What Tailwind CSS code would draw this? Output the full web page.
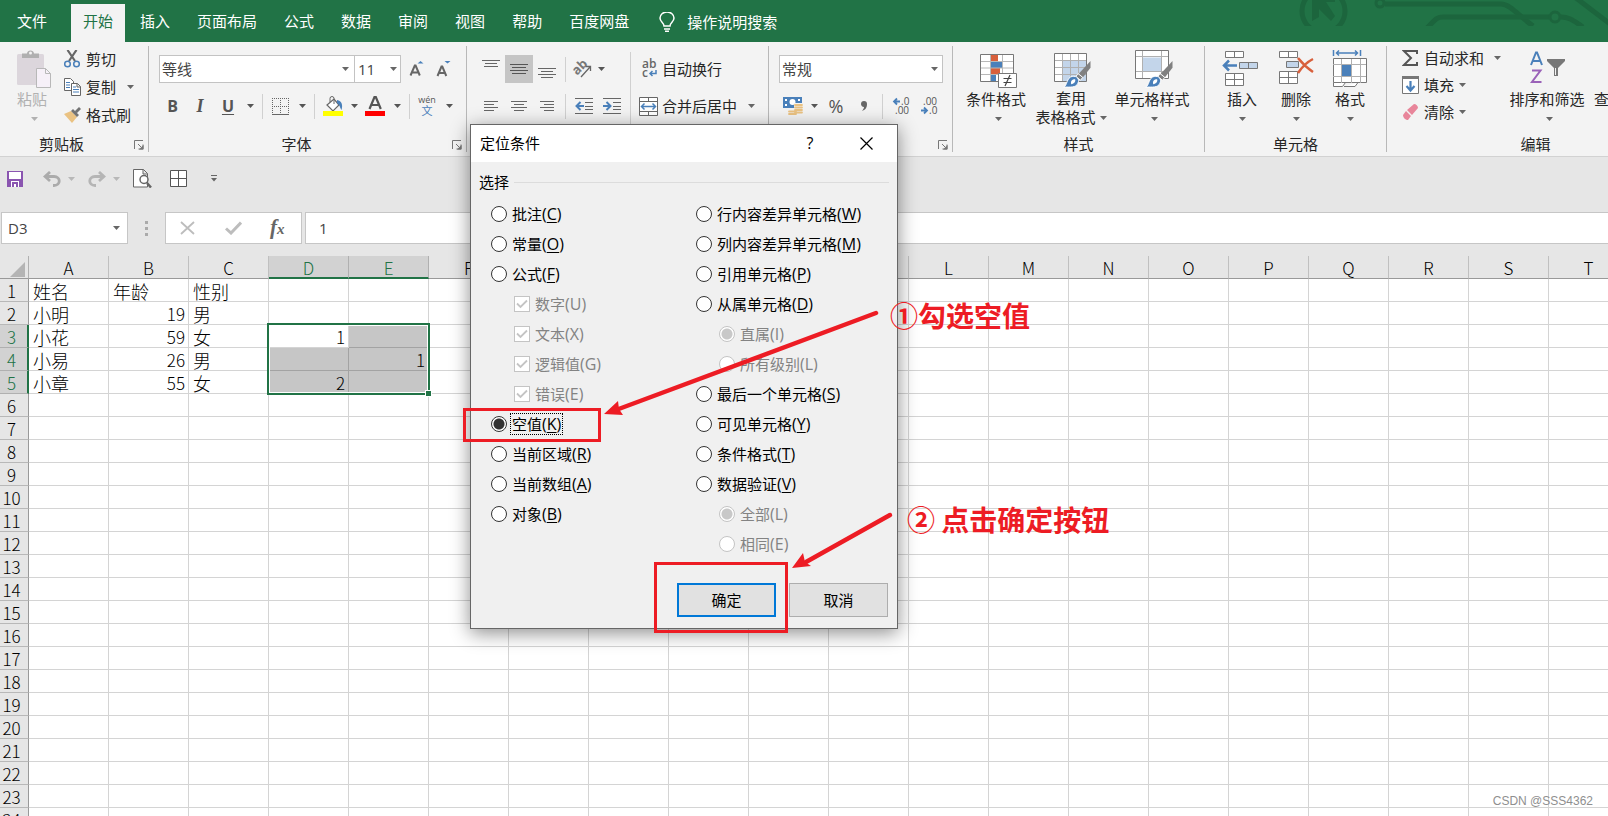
<!DOCTYPE html>
<html lang="zh-CN">
<head>
<meta charset="utf-8">
<title>Excel - 定位条件</title>
<script src="https://cdn.jsdelivr.net/npm/@tailwindcss/browser@4"></script>
</head>
<body class="relative h-screen overflow-hidden bg-[#e6e6e6] font-['Open_Sans','Noto_Sans_CJK_SC',sans-serif] text-[15px] leading-5 text-[#262626]">

<svg class="hidden">
  <symbol id="caret" viewBox="0 0 7 4"><path d="M0 0h7L3.500 4z" fill="currentColor"/></symbol>
  <symbol id="launcher" viewBox="0 0 10 10"><path d="M.5 9V.5H9M4 4l3.500 3.500M9 4.500V9H4.500" fill="none" stroke="#777"/><path d="M9.500 5v4.500H5z" fill="#777"/></symbol>
  <symbol id="brush" viewBox="0 0 28 28"><path d="M28 0v7l-8 10-4-4z" fill="#808080"/><path d="M15 13l5 4-2.500 3-4.500-4z" fill="#808080" stroke="#fff"/><path d="M0 27c4-1 3-10 9-11 5-1 8 3 6 7-2 5-8 4-15 4z" fill="#4a80ba" stroke="#fff"/><path d="M8 24c-1-3 1-5 4-5 1 2-1 5-4 5z" fill="#fff"/></symbol>
</svg>

<div class="flex h-full flex-col">
  <!-- Ribbon tabs -->
  <header class="relative flex h-[42px] shrink-0 items-end overflow-hidden bg-[#217346] text-white">
    <svg class="absolute top-0 right-0 h-[26px] w-[310px]" viewBox="0 0 310 26" fill="none" stroke="#1c653d" stroke-width="5">
      <circle cx="25.500" cy="11" r="21.500"/>
      <path d="M14 0h23v2h-9l9 14-4 5-12-12v8l-7 4z" fill="#1c653d" stroke="none"/>
      <circle cx="82" cy="3" r="4" stroke-width="3"/><path d="M87 4h116c9 0 18 12 32 22"/>
      <path d="M129 28c8-8 9-11 16-11h106"/><circle cx="257" cy="17" r="5" stroke-width="3"/><path d="M263 17c9 0 14 5 22 10M278-2l34 26"/>
    </svg>
    <nav class="flex h-[38px] items-stretch">
      <a href="#" class="flex items-center pr-6 pl-[17px] pb-1">文件</a>
      <div class="flex gap-[3px]">
        <a href="#" class="flex items-center bg-[#f3f3f3] px-3 pb-1 text-[#217346]">开始</a>
        <a href="#" class="flex items-center px-3 pb-1">插入</a>
        <a href="#" class="flex items-center px-3 pb-1">页面布局</a>
        <a href="#" class="flex items-center px-3 pb-1">公式</a>
        <a href="#" class="flex items-center px-3 pb-1">数据</a>
        <a href="#" class="flex items-center px-3 pb-1">审阅</a>
        <a href="#" class="flex items-center px-3 pb-1">视图</a>
        <a href="#" class="flex items-center px-3 pb-1">帮助</a>
        <a href="#" class="flex items-center px-3 pb-1">百度网盘</a>
      </div>
    </nav>
    <button class="ml-[18px] flex h-[38px] items-center gap-3 pb-[2px]">
      <svg class="h-5 w-4" viewBox="0 0 16 20" fill="none" stroke="#fff" stroke-width="1.500"><path d="M5 14c0-3-4-4-4-8a7 6 0 0 1 14 0c0 4-4 5-4 8zM5 17h6M6 19.250h4"/></svg>
      操作说明搜索
    </button>
  </header>

  <!-- Ribbon -->
  <section class="flex h-[115px] shrink-0 overflow-hidden border-b border-[#d2d2d2] bg-[#f3f3f3]">
    <!-- Clipboard -->
    <div class="flex w-[149px] shrink-0 flex-col">
      <div class="flex h-[92px]">
        <button class="ml-2 flex w-[52px] flex-col items-center pt-2 text-[#b1b1b1]">
          <svg class="h-[38px] w-9" viewBox="0 0 36 38"><rect x="1" y="4" width="27" height="31" rx="1.500" fill="#dcd6dc"/><path d="M6 8V3.500h5C11-.5 18-.5 18 3.500h5V8z" fill="#b0b0b0"/><circle cx="14.500" cy="3" r="1.500" fill="#f3f3f3"/><path d="M20.500 18.500h9l5 5v14h-14z" fill="#f6f0f8" stroke="#b8b8b8"/><path d="M29.500 18.500v5h5" fill="none" stroke="#b8b8b8"/></svg>
          <span class="mt-px mr-1">粘贴</span>
          <svg class="mt-2 h-1 w-[7px]"><use href="#caret"/></svg>
        </button>
        <div class="ml-1 flex flex-col pt-[3px]">
          <button class="flex h-7 items-center gap-[6px]">
            <svg class="h-[18px] w-4" viewBox="0 0 16 18" fill="none"><path d="M3.500 0l7.500 11M12.500 0L5 11" stroke="#666" stroke-width="2.200"/><circle cx="3.500" cy="14" r="2.800" stroke="#4a80ba" stroke-width="1.500"/><circle cx="12.500" cy="14" r="2.800" stroke="#4a80ba" stroke-width="1.500"/></svg>剪切</button>
          <button class="flex h-7 items-center gap-[5px]">
            <svg class="h-[18px] w-[17px]" viewBox="0 0 17 18" fill="#fff" stroke="#666"><path d="M.5.5h6l3 3v9h-9z"/><path d="M2 4.500h4M2 7h4M2 9.500h4" stroke="#4a80ba"/><path d="M7.500 5.500h6l3 3v9h-9zM13 5.500V9h3.500"/><path d="M9 9h3M9 11.500h6M9 14h6" stroke="#4a80ba"/></svg>复制
            <svg class="ml-[6px] h-1 w-[7px] text-[#666]"><use href="#caret"/></svg></button>
          <button class="flex h-7 items-center gap-[5px]">
            <svg class="h-4 w-[17px]" viewBox="0 0 17 16"><path d="M0 7l7-3 6 6-5 6z" fill="#eac282"/><path d="M7 4l2-2 6 6-2 2zM11 4l4-4 2 2-4 4z" fill="#737373"/></svg>格式刷</button>
        </div>
      </div>
      <div class="flex items-center"><span class="flex-1 text-center">剪贴板</span><button aria-label="剪贴板选项" class="w-[26px]"><svg class="mx-auto mt-[2px] mr-[5px] h-[10px] w-[10px]"><use href="#launcher"/></svg></button></div>
    </div>
    <div class="-ml-px mt-1 h-[106px] w-px shrink-0 bg-[#b8b8b8]"></div>

    <!-- Font -->
    <div class="flex w-[317px] shrink-0 flex-col">
      <div class="flex h-[92px] flex-col gap-[10px] pt-[13px] pl-[10px]">
        <div class="flex h-7 items-center">
          <div class="relative"><select aria-label="字体" class="h-7 w-[196px] appearance-none border border-[#c3c3c3] bg-white px-[2px] text-[#444]"><option>等线</option></select><svg class="pointer-events-none absolute top-3 right-[6px] h-1 w-[7px] text-[#666]"><use href="#caret"/></svg></div>
          <div class="relative -ml-px"><select aria-label="字号" class="h-7 w-[47px] appearance-none border border-[#c3c3c3] bg-white px-[3px] text-[#444]"><option>11</option></select><svg class="pointer-events-none absolute top-3 right-1 h-1 w-[7px] text-[#666]"><use href="#caret"/></svg></div>
          <button aria-label="增大字号" class="ml-2 flex w-[18px]"><svg class="h-4 w-[16px]" viewBox="0 0 16 16"><path d="M1.500 14.500L5.800 4.500h.8l4.200 10M3 11.500h6.500" fill="none" stroke="#666" stroke-width="2"/><path d="M8.500 2.500L11.500 0l3 2.500z" fill="#4a80ba"/></svg></button>
          <button aria-label="减小字号" class="ml-[9px] flex w-[18px]"><svg class="h-4 w-[16px]" viewBox="0 0 16 16"><path d="M1.500 15L5.500 5.500h.8l4 9.500M3 12h6" fill="none" stroke="#666" stroke-width="2"/><path d="M8.500 0h6l-3 2.500z" fill="#4a80ba"/></svg></button>
        </div>
        <div class="flex h-[26px] items-center text-[#555]">
          <button class="w-[27px] text-base font-bold">B</button>
          <button class="w-7 font-['Liberation_Serif',serif] text-lg font-bold italic">I</button>
          <button class="w-7 text-base font-bold underline underline-offset-2">U</button>
          <button aria-label="下划线选项" class="flex w-4 justify-center"><svg class="h-1 w-[7px]"><use href="#caret"/></svg></button>
          <span class="ml-1 h-[25px] w-px bg-[#d0d0d0]"></span>
          <button aria-label="边框" class="flex w-[34px] justify-center"><svg class="h-[17px] w-[17px]" viewBox="0 0 17 17" fill="none" stroke="#666"><path d="M.5 0v16M16.500 0v16M0 .5h17M8.500 0v16M0 8.500h17" stroke-dasharray="1 1"/><path d="M0 16.500h17"/></svg></button>
          <button aria-label="边框选项" class="flex w-[10px] justify-center"><svg class="h-1 w-[7px]"><use href="#caret"/></svg></button>
          <span class="ml-[7px] h-[25px] w-px bg-[#d0d0d0]"></span>
          <button aria-label="填充颜色" class="flex w-[35px] justify-center"><svg class="h-5 w-5" viewBox="0 0 20 20"><path d="M4 9l7-6 5 6-6 6z" fill="#fff" stroke="#666" stroke-width="1.200"/><path d="M7 6V2.500a2 2 0 0 1 4 0V8" fill="none" stroke="#666"/><path d="M14 4c5 1 6 5 4.500 10C17 12 17 9 14 7z" fill="#4a80ba"/><path d="M0 15h20v5H0z" fill="#ff0"/></svg></button>
          <button aria-label="填充选项" class="flex w-2 justify-center"><svg class="h-1 w-[7px]"><use href="#caret"/></svg></button>
          <button aria-label="字体颜色" class="flex w-[34px] justify-center"><svg class="h-5 w-5" viewBox="0 0 20 20"><path d="M4.500 13L9.500 1h1.300l5 12M6.500 9h7" fill="none" stroke="#555" stroke-width="2.200"/><path d="M0 15h20v5H0z" fill="red"/></svg></button>
          <button aria-label="颜色选项" class="flex w-[10px] justify-center"><svg class="h-1 w-[7px]"><use href="#caret"/></svg></button>
          <span class="ml-[7px] h-[25px] w-px bg-[#d0d0d0]"></span>
          <button class="flex w-[34px] flex-col items-center text-[9px] leading-[9px]"><span>wén</span><span class="text-[11px] leading-[13px] text-[#4a80ba]">文</span></button>
          <button aria-label="拼音选项" class="flex w-[10px] justify-center"><svg class="h-1 w-[7px]"><use href="#caret"/></svg></button>
        </div>
      </div>
      <div class="flex items-center"><span class="flex-1 text-center">字体</span><button aria-label="字体选项" class="w-[22px]"><svg class="mx-auto mt-[2px] mr-1 h-[10px] w-[10px]"><use href="#launcher"/></svg></button></div>
    </div>
    <div class="mt-1 h-[106px] w-px shrink-0 bg-[#b8b8b8]"></div>

    <!-- Alignment -->
    <div class="flex w-[301px] shrink-0 flex-col">
      <div class="flex h-[92px]">
        <div class="flex w-[163px] flex-col gap-[10px] pt-[13px] pl-[10px] text-[#555]">
          <div class="flex h-7 items-center">
            <button aria-label="顶端对齐" class="flex h-7 w-7 items-start justify-center pt-[5px]"><svg class="h-2 w-[18px]" viewBox="0 0 18 8" stroke="#666"><path d="M0 .5h18M3 3.500h12M2 6.500h14"/></svg></button>
            <button aria-label="垂直居中" class="flex h-7 w-7 items-center justify-center bg-[#c5c5c5]"><svg class="h-[11px] w-[18px]" viewBox="0 0 18 11" stroke="#555"><path d="M0 .5h18M2 3.500h14M0 6.500h18M2 9.500h14"/></svg></button>
            <button aria-label="底端对齐" class="flex h-7 w-7 items-end justify-center pb-[4px]"><svg class="h-[11px] w-[18px]" viewBox="0 0 18 11" stroke="#666"><path d="M0 .5h18M3 3.500h12M0 6.500h18M3 9.500h12"/></svg></button>
            <span class="ml-1 h-[25px] w-px bg-[#d0d0d0]"></span>
            <button aria-label="方向" class="flex w-[32px] justify-center"><svg class="h-5 w-5 overflow-visible" viewBox="0 0 20 20"><text x="0" y="13" font-size="13" font-weight="700" fill="#777" transform="rotate(-45 7 9)">ab</text><path d="M9 18L18 8M18.500 12V7.500H14" fill="none" stroke="#666" stroke-width="1.300"/></svg></button>
            <svg class="h-1 w-[7px]"><use href="#caret"/></svg>
          </div>
          <div class="flex h-[26px] items-center">
            <button aria-label="左对齐" class="flex w-7 justify-center"><svg class="h-[10px] w-[14px]" viewBox="0 0 14 10" stroke="#666"><path d="M0 .5h14M0 3.500h10M0 6.500h14M0 9.500h10"/></svg></button>
            <button aria-label="居中" class="flex w-7 justify-center"><svg class="h-[10px] w-4" viewBox="0 0 16 10" stroke="#666"><path d="M0 .5h16M3 3.500h10M0 6.500h16M3 9.500h10"/></svg></button>
            <button aria-label="右对齐" class="flex w-7 justify-center"><svg class="h-[10px] w-[14px]" viewBox="0 0 14 10" stroke="#666"><path d="M0 .5h14M4 3.500h10M0 6.500h14M4 9.500h10"/></svg></button>
            <span class="ml-1 h-[25px] w-px bg-[#d0d0d0]"></span>
            <button aria-label="减少缩进" class="ml-1 flex w-7 justify-center"><svg class="h-4 w-[18px]" viewBox="0 0 18 16" stroke="#666"><path d="M0 .5h18M10 4.500h8M10 8.500h8M10 11.500h8M0 15.500h18"/><path d="M9 8H1M5.500 4L1.500 8l4 4" fill="none" stroke="#4a80ba" stroke-width="2"/></svg></button>
            <button aria-label="增加缩进" class="flex w-7 justify-center"><svg class="h-4 w-[18px]" viewBox="0 0 18 16" stroke="#666"><path d="M0 .5h18M10 4.500h8M10 8.500h8M10 11.500h8M0 15.500h18"/><path d="M0 8h8M3.500 4l4 4-4 4" fill="none" stroke="#4a80ba" stroke-width="2"/></svg></button>
          </div>
        </div>
        <span class="mt-[10px] h-[72px] w-px bg-[#d0d0d0]"></span>
        <div class="flex flex-col gap-[10px] pt-[13px] pl-2">
          <button class="flex h-7 items-center gap-1"><svg class="h-5 w-[19px] overflow-visible" viewBox="0 0 19 20" font-size="12" font-weight="600" fill="#666"><text x="3" y="9">ab</text><text x="3" y="18">c</text><path d="M17 11v3.500h-6M13.500 12L11 14.500l2.500 2.500" fill="none" stroke="#4a80ba" stroke-width="1.500"/></svg>自动换行</button>
          <button class="flex h-[26px] items-center gap-1"><svg class="h-[19px] w-[19px]" viewBox="0 0 19 19" fill="#fff" stroke="#666"><path d="M.5.5h18v18H.5zM.5 4.500h18M.5 14.500h18M9.500.5v4M9.500 14.500v4"/><path d="M3 9.500h13M5.500 6.500l-3 3 3 3M13.500 6.500l3 3-3 3" fill="none" stroke="#4a80ba" stroke-width="1.500"/></svg>合并后居中<svg class="ml-[7px] h-1 w-[7px] text-[#666]"><use href="#caret"/></svg></button>
        </div>
      </div>
      <div class="flex items-center"><span class="flex-1 text-center">对齐方式</span></div>
    </div>
    <div class="mt-1 h-[106px] w-px shrink-0 bg-[#b8b8b8]"></div>

    <!-- Number -->
    <div class="flex w-[183px] shrink-0 flex-col">
      <div class="flex h-[92px] flex-col gap-[10px] pt-[13px] pl-[10px]">
        <div class="relative h-7"><select aria-label="数字格式" class="h-7 w-[164px] appearance-none border border-[#c3c3c3] bg-white px-[2px] text-[#444]"><option>常规</option></select><svg class="pointer-events-none absolute top-3 right-[14px] h-1 w-[7px] text-[#666]"><use href="#caret"/></svg></div>
        <div class="flex h-[26px] items-center text-[#555]">
          <button aria-label="会计数字格式" class="ml-1 flex w-5"><svg class="h-5 w-5" viewBox="0 0 20 20"><path d="M0 1h19v11H0z" fill="#4a80ba"/><circle cx="9.500" cy="6" r="3" fill="#fff"/><path d="M2 3h2v2H2zM15 3h2v2h-2zM2 8h2v2H2z" fill="#fff"/><path d="M11 7h9v13H5v-6h6z" fill="#f3f3f3"/><path d="M12 9h7M12 11.500h7M12 14h7M12 16.500h7M6 15.500h7M6 18h7" stroke="#eac282" stroke-width="1.800" stroke-linecap="round"/></svg></button>
          <svg class="ml-2 h-1 w-[7px]"><use href="#caret"/></svg>
          <button class="ml-[8px] w-5 text-lg">%</button>
          <button aria-label="千位分隔样式" class="ml-2 flex w-5 justify-center"><svg class="h-[10px] w-[6px]" viewBox="0 0 6 10"><path d="M0 3a3 3 0 0 1 6 0c0 4-2 6-5 7 1-1.500 2-2.500 2-4C1 6 0 4.500 0 3z" fill="#666"/></svg></button>
          <span class="ml-[8px] h-[25px] w-px bg-[#d0d0d0]"></span>
          <button aria-label="增加小数位数" class="ml-[10px] flex w-4"><svg class="h-[18px] w-4 overflow-visible" viewBox="0 0 16 18" font-size="10" fill="#555"><path d="M7 4.500H1.500M4 1.500l-3 3 3 3" fill="none" stroke="#4a80ba" stroke-width="1.800"/><text x="8" y="8">.0</text><text x="2" y="17">.00</text></svg></button>
          <button aria-label="减少小数位数" class="ml-3 flex w-4"><svg class="h-[18px] w-4 overflow-visible" viewBox="0 0 16 18" font-size="10" fill="#555"><path d="M0 13.500h5.500M3 10.500l3 3-3 3" fill="none" stroke="#4a80ba" stroke-width="1.800"/><text x="2" y="8">.00</text><text x="8" y="17">.0</text></svg></button>
        </div>
      </div>
      <div class="flex items-center"><span class="flex-1 text-center">数字</span><button aria-label="数字选项" class="w-[22px]"><svg class="mx-auto mt-[2px] mr-1 h-[10px] w-[10px]"><use href="#launcher"/></svg></button></div>
    </div>
    <div class="mt-1 h-[106px] w-px shrink-0 bg-[#b8b8b8]"></div>

    <!-- Styles -->
    <div class="flex w-[251px] shrink-0 flex-col">
      <div class="flex h-[92px] pt-2 pl-[9px]">
        <button class="flex w-[72px] flex-col items-center">
          <svg class="h-[38px] w-[38px]" viewBox="0 0 38 38"><path d="M1.500 4.500h33v27h-33z" fill="#fff"/><path d="M12 5h7v6h-7zM12 18h9v6h-9z" fill="#d8603c"/><path d="M12 11h11v7H12zM12 24h5v7h-5z" fill="#4a80ba"/><path d="M1 11.500h33M1 18h33M1 24.500h18M11.500 4v27M23.500 4v27" stroke="#b8b8b8" fill="none"/><path d="M1.500 4.500h33v27h-33z" fill="none" stroke="#777"/><path d="M19.500 23.500h18v14h-18z" fill="#fff" stroke="#777"/><path d="M24.500 28.500h8M24.500 32.500h8M31 25l-5 11" stroke="#444" stroke-width="1.200"/></svg>
          <span class="mt-px mr-1 whitespace-nowrap">条件格式</span>
          <svg class="mt-2 h-1 w-[7px] text-[#666]"><use href="#caret"/></svg>
        </button>
        <button class="flex w-[76px] flex-col items-center">
          <svg class="h-[38px] w-[38px]" viewBox="0 0 38 38"><path d="M1.500 3.500h32v28h-32z" fill="#fff"/><path d="M9.500 10.500h24v21h-24z" fill="#c3d5ea"/><path d="M1 10.500h32M1 17.500h32M1 24.500h32M9.500 3v28M17.500 3v28M25.500 3v28" stroke="#b0b0b0"/><path d="M1.500 3.500h32v28h-32z" fill="none" stroke="#777"/><use href="#brush" x="10" y="11" width="28" height="27"/></svg>
          <span class="mt-px mr-[2px] leading-[19px]">套用</span>
          <span class="mr-[2px] flex items-center gap-1 whitespace-nowrap leading-[19px]">表格格式<svg class="h-1 w-[7px] text-[#666]"><use href="#caret"/></svg></span>
        </button>
        <button class="ml-[2px] flex w-[84px] flex-col items-center">
          <svg class="h-[38px] w-[38px] shrink-0" viewBox="0 0 38 38"><path d="M.5.5h33v28H.5z" fill="#fff"/><path d="M7 7.500h19v14H7z" fill="#c3d5ea"/><path d="M1 6.500h32M1 21.500h32M7.500 1v27M26.500 1v27" stroke="#b0b0b0"/><path d="M.5.5h33v28H.5z" fill="none" stroke="#777"/><use href="#brush" x="10" y="11" width="28" height="27"/></svg>
          <span class="mt-px mr-1 whitespace-nowrap">单元格样式</span>
          <svg class="mt-2 h-1 w-[7px] text-[#666]"><use href="#caret"/></svg>
        </button>
      </div>
      <span class="text-center">样式</span>
    </div>
    <div class="mt-1 h-[106px] w-px shrink-0 bg-[#b8b8b8]"></div>

    <!-- Cells -->
    <div class="flex w-[181px] shrink-0 flex-col">
      <div class="flex h-[92px] pt-2 pl-[10px]">
        <button class="flex w-[54px] flex-col items-center">
          <svg class="h-[38px] w-10" viewBox="0 0 40 38" fill="#fff" stroke="#777"><path d="M3.500 1.500h18v6h-18zM12.500 1.500v6M3.500 23.500h18v12h-18zM12.500 23.500v12M3.500 29.500h18"/><path d="M17.500 12.500h18v6h-18zM26.500 12.500v6" fill="#c3d5ea"/><path d="M15 15.500H2M7 10.500l-5 5 5 5" fill="none" stroke="#4a80ba" stroke-width="2.500"/></svg>
          <span class="mt-px">插入</span><svg class="mt-2 h-1 w-[7px] text-[#666]"><use href="#caret"/></svg>
        </button>
        <button class="flex w-[54px] flex-col items-center">
          <svg class="h-[38px] w-9" viewBox="0 0 36 38" fill="#fff" stroke="#777"><path d="M1.500 1.500h18v6h-18zM10.500 1.500v6M1.500 21.500h18v12h-18zM10.500 21.500v12M1.500 27.500h18"/><path d="M8.500 11.500h12v6h-12z" fill="#c3d5ea"/><path d="M20 8c4 5 9 10 15 14M35 9c-6 3-11 8-15 14" fill="none" stroke="#d8603c" stroke-width="2.500"/></svg>
          <span class="mt-px">删除</span><svg class="mt-2 h-1 w-[7px] text-[#666]"><use href="#caret"/></svg>
        </button>
        <button class="flex w-[54px] flex-col items-center">
          <svg class="h-[38px] w-9" viewBox="0 0 36 38" fill="#fff" stroke="#777"><path d="M1.500 8.500h33v24h-33zM1.500 32.500v4h9l3-4M12 36.500h11l3-4"/><path d="M1 14.500h33M1 26.500h33M9.500 9v24M19.500 9v24M28.500 9v24" stroke="#b0b0b0"/><path d="M10 15h9v11h-9z" fill="#4a80ba" stroke="none"/><path d="M1.500 0v6M28.500 0v6M4 3h22M7 .5L4.500 3 7 5.500M23 .5L25.500 3 23 5.500" fill="none" stroke="#4a80ba" stroke-width="1.500"/></svg>
          <span class="mt-px">格式</span><svg class="mt-2 h-1 w-[7px] text-[#666]"><use href="#caret"/></svg>
        </button>
      </div>
      <span class="text-center">单元格</span>
    </div>
    <div class="mt-1 h-[106px] w-px shrink-0 bg-[#b8b8b8]"></div>

    <!-- Editing -->
    <div class="flex w-[297px] shrink-0 flex-col">
      <div class="flex h-[92px]">
        <div class="flex w-[117px] flex-col pt-[2px] pl-[15px]">
          <button class="flex h-[27px] items-center gap-[5px]"><svg class="h-4 w-[17px]" viewBox="0 0 17 16"><path d="M15 4V1H2l7 7-7 7h13v-3" fill="none" stroke="#555" stroke-width="2"/></svg>自动求和<svg class="ml-[5px] h-1 w-[7px] text-[#666]"><use href="#caret"/></svg></button>
          <button class="flex h-[27px] items-center gap-[5px]"><svg class="h-[18px] w-[17px]" viewBox="0 0 17 18"><path d="M.5.5h16v17H.5z" fill="#fff" stroke="#777"/><path d="M0 0h17v3H0z" fill="#777"/><path d="M8.500 5v9M4.500 10l4 4.500 4-4.500" fill="none" stroke="#4a80ba" stroke-width="2.200"/></svg>填充<svg class="h-1 w-[7px] text-[#666]"><use href="#caret"/></svg></button>
          <button class="flex h-[27px] items-center gap-[5px]"><svg class="h-4 w-[17px]" viewBox="0 0 17 16"><path d="M5 6l7-6c2 0 4 2 4 4l-6 7zM4 7l5 5-3 4c-2 0-5-2-5-5z" fill="#e8859a"/></svg>清除<svg class="h-1 w-[7px] text-[#666]"><use href="#caret"/></svg></button>
        </div>
        <button class="flex w-[90px] flex-col items-center pt-2">
          <svg class="h-[38px] w-10" viewBox="0 0 40 38" fill="none"><path d="M2 15L7 2.500h1L13 15M4 11h7" stroke="#4a80ba" stroke-width="2"/><path d="M3 20.500h8.500L3 32h9.500" stroke="#9a62b8" stroke-width="2"/><path d="M18 9h18v2l-7 7v8h-4v-8l-7-7z" fill="#777"/><path d="M26.500 18v7" stroke="#f3f3f3"/></svg>
          <span class="mt-px mr-1 whitespace-nowrap">排序和筛选</span><svg class="mt-2 h-1 w-[7px] text-[#666]"><use href="#caret"/></svg>
        </button>
        <button class="flex w-[75px] flex-col pt-[47px] whitespace-nowrap">查找和选择</button>
      </div>
      <span class="text-center">编辑</span>
    </div>
  </section>

  <!-- Quick access toolbar -->
  <div class="flex h-[43px] shrink-0 items-center pl-[7px]">
    <button aria-label="保存"><svg class="h-4 w-4" viewBox="0 0 16 16"><path d="M0 0h16v16H0z" fill="#8a55b0"/><path d="M2 1h12v7H2zM4 10h8v6H4z" fill="#fff"/><path d="M5 11h6v5H9v-3H7v3H5z" fill="#8a55b0"/></svg></button>
    <button aria-label="撤消" class="ml-5 flex items-center gap-[7px] text-[#b8b8b8]"><svg class="h-4 w-[18px]" viewBox="0 0 18 16" fill="none" stroke="#ababab" stroke-width="2.800"><path d="M7 1L2 5.500 7 10M2 5.500h9c7 0 7 9 0 9h-1"/></svg><svg class="h-1 w-[7px]"><use href="#caret"/></svg></button>
    <button aria-label="恢复" class="ml-[13px] flex items-center gap-[7px] text-[#b8b8b8]"><svg class="h-4 w-[18px]" viewBox="0 0 18 16" fill="none" stroke="#b5b5b5" stroke-width="2.800"><path d="M11 1l5 4.500-5 4.500M16 5.500H7c-7 0-7 9 0 9h1"/></svg><svg class="h-1 w-[7px]"><use href="#caret"/></svg></button>
    <button aria-label="打印预览" class="ml-[13px]"><svg class="h-[19px] w-[19px]" viewBox="0 0 19 19" fill="#fff" stroke="#666"><path d="M.5.5h10l4 4V18H.5zM10 .5V5h4.500"/><circle cx="11" cy="10.500" r="4" stroke-width="1.500"/><path d="M14 14l4 4.500" stroke-width="2.500"/></svg></button>
    <button aria-label="边框" class="ml-[18px]"><svg class="h-[17px] w-[17px]" viewBox="0 0 17 17" fill="#fff" stroke="#555"><path d="M.5.5h16v16H.5zM8.500.5v16M.5 8.500h16"/></svg></button>
    <button aria-label="自定义工具栏" class="ml-6"><svg class="h-[7px] w-[6px]" viewBox="0 0 6 7"><path d="M0 .5h6" stroke="#666"/><path d="M0 3h6L3 6.500z" fill="#666"/></svg></button>
  </div>

  <!-- Formula bar -->
  <div class="mt-3 mb-3 flex h-8 shrink-0 pl-px text-[#444]">
    <div class="relative"><input aria-label="名称框" value="D3" class="h-8 w-[127px] border border-[#c6c6c6] bg-white pl-[6px]"><svg class="pointer-events-none absolute top-[14px] right-2 h-1 w-[7px] text-[#666]"><use href="#caret"/></svg></div>
    <div class="ml-[17px] flex flex-col justify-center gap-[3px]"><i class="h-[3px] w-[3px] bg-[#aaa]"></i><i class="h-[3px] w-[3px] bg-[#aaa]"></i><i class="h-[3px] w-[3px] bg-[#aaa]"></i></div>
    <div class="ml-[17px] flex w-[137px] items-center border border-[#c6c6c6] bg-white">
      <button aria-label="取消输入" class="ml-[14px]"><svg class="h-[14px] w-[15px]" viewBox="0 0 15 14" fill="none" stroke="#bdbdbd" stroke-width="1.800"><path d="M1 1l13 12M14 1L1 13"/></svg></button>
      <button aria-label="输入" class="ml-[30px]"><svg class="h-[14px] w-[17px]" viewBox="0 0 17 14" fill="none" stroke="#bdbdbd" stroke-width="3"><path d="M1 7.500L6 12 16 1.500"/></svg></button>
      <button class="ml-7 font-['Liberation_Serif',serif] text-[21px] leading-6 font-bold text-[#666] italic">f<span class="text-[15px]">x</span></button>
    </div>
    <input aria-label="编辑栏" value="1" class="ml-[3px] h-8 min-w-0 flex-1 border border-r-0 border-[#c6c6c6] bg-white pl-[13px]">
  </div>

  <!-- Sheet -->
  <main class="relative min-h-0 flex-1 overflow-hidden bg-white">
    <table class="w-[1629px] table-fixed border-separate border-spacing-0 font-['Noto_Sans_CJK_SC',sans-serif] text-[17px] leading-5 font-light text-black">
      <thead><tr id="cols" class="h-[23px]"></tr></thead>
      <tbody id="rows"></tbody>
    </table>
    <div class="pointer-events-none absolute top-[67px] left-[267px] h-[72px] w-[163px] border-2 border-[#217346] shadow-[inset_0_0_0_1px_#fff]"></div>
    <div class="pointer-events-none absolute top-[134px] left-[425px] h-[7px] w-[7px] border border-white bg-[#217346]"></div>
  </main>
</div>

<div class="absolute right-[15px] bottom-[5px] font-['Liberation_Sans',sans-serif] text-xs leading-5 text-[#8f8f8f]">CSDN @SSS4362</div>

<!-- Go To Special dialog -->
<form role="dialog" aria-label="定位条件" class="absolute top-[124px] left-[470px] w-[428px] border border-[#666] bg-[#f0f0f0] pb-[11px] text-black shadow-[0_4px_18px_rgba(0,0,0,0.45)]">
  <div class="flex h-[37px] items-center bg-white pb-px pl-[9px]">
    <h1 class="flex-1">定位条件</h1>
    <button type="button" class="w-9 text-center text-base">?</button>
    <button type="button" aria-label="关闭" class="mr-[24px] ml-[32px]"><svg class="h-[13px] w-[13px]" viewBox="0 0 13 13" stroke="#000" stroke-width="1.200"><path d="M.5.500l12 12M12.500.5l-12 12"/></svg></button>
  </div>
  <div class="mt-[10px] flex items-center gap-[5px] pr-2 pl-2"><span>选择</span><span class="h-px flex-1 bg-[#dcdcdc]"></span></div>
  <div class="mt-[7px] grid grid-cols-[205px_1fr] pl-5">
    <div id="left"></div>
    <div id="right"></div>
  </div>
  <div class="mt-6 flex justify-end gap-[13px] pr-[9px]">
    <button type="submit" class="h-[34px] w-[99px] border-2 border-[#0078d7] bg-[#e1e1e1]">确定</button>
    <button type="button" class="h-[34px] w-[99px] border border-[#adadad] bg-[#e1e1e1]">取消</button>
  </div>
</form>

<!-- Tutorial annotations -->
<div class="pointer-events-none absolute top-[408px] left-[463px] h-[34px] w-[138px] border-3 border-[#ed1c24]"></div>
<div class="pointer-events-none absolute top-[562px] left-[654px] h-[71px] w-[134px] border-3 border-[#ed1c24]"></div>
<svg class="pointer-events-none absolute top-[300px] left-[600px] h-[280px] w-[300px]" viewBox="600 300 300 280" fill="#ed1c24" stroke="#ed1c24" stroke-linecap="round">
  <path d="M876 313L616 410" stroke-width="4.500"/><path d="M604 414l14-13 1 8 4 6z" stroke="none"/>
  <path d="M890 515l-84 47" stroke-width="4.500"/><path d="M792 568l11-15 2 9 6 4z" stroke="none"/>
</svg>
<p class="absolute top-[295px] left-[890px] font-['Noto_Sans_CJK_SC',sans-serif] text-[28px] leading-10 font-bold whitespace-nowrap text-[#ed1c24]">①勾选空值</p>
<p class="absolute top-[499px] left-[907px] font-['Noto_Sans_CJK_SC',sans-serif] text-[28px] leading-10 font-bold whitespace-nowrap text-[#ed1c24]">② 点击确定按钮</p>

<script>
const letters = 'ABCDEFGHIJKLMNOPQRST'.split('');
const data = {1:['姓名','年龄','性别'],2:['小明',19,'男'],3:['小花',59,'女',1],4:['小易',26,'男','',1],5:['小章',55,'女',2]};
const grayHead = 'w-[80px] border-r border-b border-r-[#c0c0c0] border-b-[#999] bg-[#e6e6e6] p-0 pt-[2px] font-light leading-5';
const selHead = 'w-[80px] border-r border-b-2 border-r-[#b0b0b0] border-b-[#217346] bg-[#d2d2d2] p-0 pt-[2px] font-light leading-[19px] text-[#217346]';
document.getElementById('cols').innerHTML =
  '<th class="w-[29px] border-r border-b border-r-[#b0b0b0] border-b-[#999] bg-[#e6e6e6] p-0"><svg class="mt-1 ml-[10px] h-[15px] w-[15px]" viewBox="0 0 15 15"><path d="M15 0v15H0z" fill="#b4b4b4"/></svg></th>' +
  letters.map((l, i) => '<th class="' + (i == 3 || i == 4 ? selHead : grayHead) + '">' + l + '</th>').join('');
let html = '';
for (let r = 1; r <= 24; r++) {
  const sel = r >= 3 && r <= 5;
  html += '<tr class="h-[23px]"><th class="' + (sel
    ? 'border-r-2 border-b border-r-[#217346] border-b-[#b0b0b0] bg-[#d2d2d2] p-0 pt-[2px] pr-1 font-light text-[#217346]'
    : 'border-r border-b border-r-[#999] border-b-[#b8b8b8] bg-[#e6e6e6] p-0 pt-[2px] pr-[5px] font-light') + '">' + r + '</th>';
  for (let c = 0; c < 20; c++) {
    const v = (data[r] || [])[c] ?? '';
    const inSel = sel && (c == 3 || c == 4) && !(r == 3 && c == 3);
    html += '<td class="' + (inSel ? 'border-r border-b border-[#a3a3a3] bg-[#c6c6c6] p-0 pt-[2px] ' : 'border-r border-b border-[#d4d4d4] p-0 pt-[2px] ') +
      (typeof v == 'number' ? 'pr-[3px] text-right' : 'pl-1 text-left text-lg leading-5') + '">' + v + '</td>';
  }
  html += '</tr>';
}
document.getElementById('rows').innerHTML = html;

const radio = 'h-4 w-4 shrink-0 appearance-none rounded-full border border-[#333] bg-white checked:bg-[radial-gradient(circle,#333_5px,#fff_6px)] disabled:border-[#c4c4c4] disabled:checked:bg-[radial-gradient(circle,#c8c8c8_5px,#fff_6px)]';
const check = 'h-4 w-4 shrink-0 appearance-none border border-[#c4c4c4] bg-white';
const tick = '<svg class="pointer-events-none absolute top-0 left-0 h-4 w-4" viewBox="0 0 16 16" fill="none" stroke="#c4c4c4" stroke-width="1.800"><path d="M3 7.500l3.500 3.500L13 4.500"/></svg>';
// [text, access key, kind, checked, radio group]
const left = [['批注','C','r'],['常量','O','r'],['公式','F','r'],['数字','U','c'],['文本','X','c'],['逻辑值','G','c'],['错误','E','c'],['空值','K','r',1],['当前区域','R','r'],['当前数组','A','r'],['对象','B','r']];
const right = [['行内容差异单元格','W','r'],['列内容差异单元格','M','r'],['引用单元格','P','r'],['从属单元格','D','r'],['直属','I','s',1,'dep'],['所有级别','L','s',0,'dep'],['最后一个单元格','S','r'],['可见单元格','Y','r'],['条件格式','T','r'],['数据验证','V','r'],['全部','L','s',1,'val'],['相同','E','s',0,'val']];
function row([t, k, kind, on, group]) {
  const focus = kind == 'r' && on;
  const box = kind == 'c'
    ? '<span class="relative flex">' + '<input type="checkbox" disabled checked class="' + check + '">' + tick + '</span>'
    : '<input type="radio" name="' + (group || 'goto') + '"' + (on ? ' checked' : '') + (kind == 's' ? ' disabled' : '') + ' class="' + radio + '">';
  const key = kind == 'r' ? '<u class="underline-offset-2">' + k + '</u>' : k;
  return '<label class="' + (kind == 'r' ? 'flex h-[30px] items-center gap-[3px]' : 'flex h-[30px] items-center gap-[3px] pl-[23px] text-[#838383]') + '">' + box +
    '<span class="' + (focus ? 'border border-dotted border-black px-px whitespace-nowrap' : 'border border-transparent px-px whitespace-nowrap') + '">' + t + '<span class="text-base leading-5">(' + key + ')</span></span></label>';
}
document.getElementById('left').innerHTML = left.map(row).join('');
document.getElementById('right').innerHTML = right.map(row).join('');
</script>
</body>
</html>
